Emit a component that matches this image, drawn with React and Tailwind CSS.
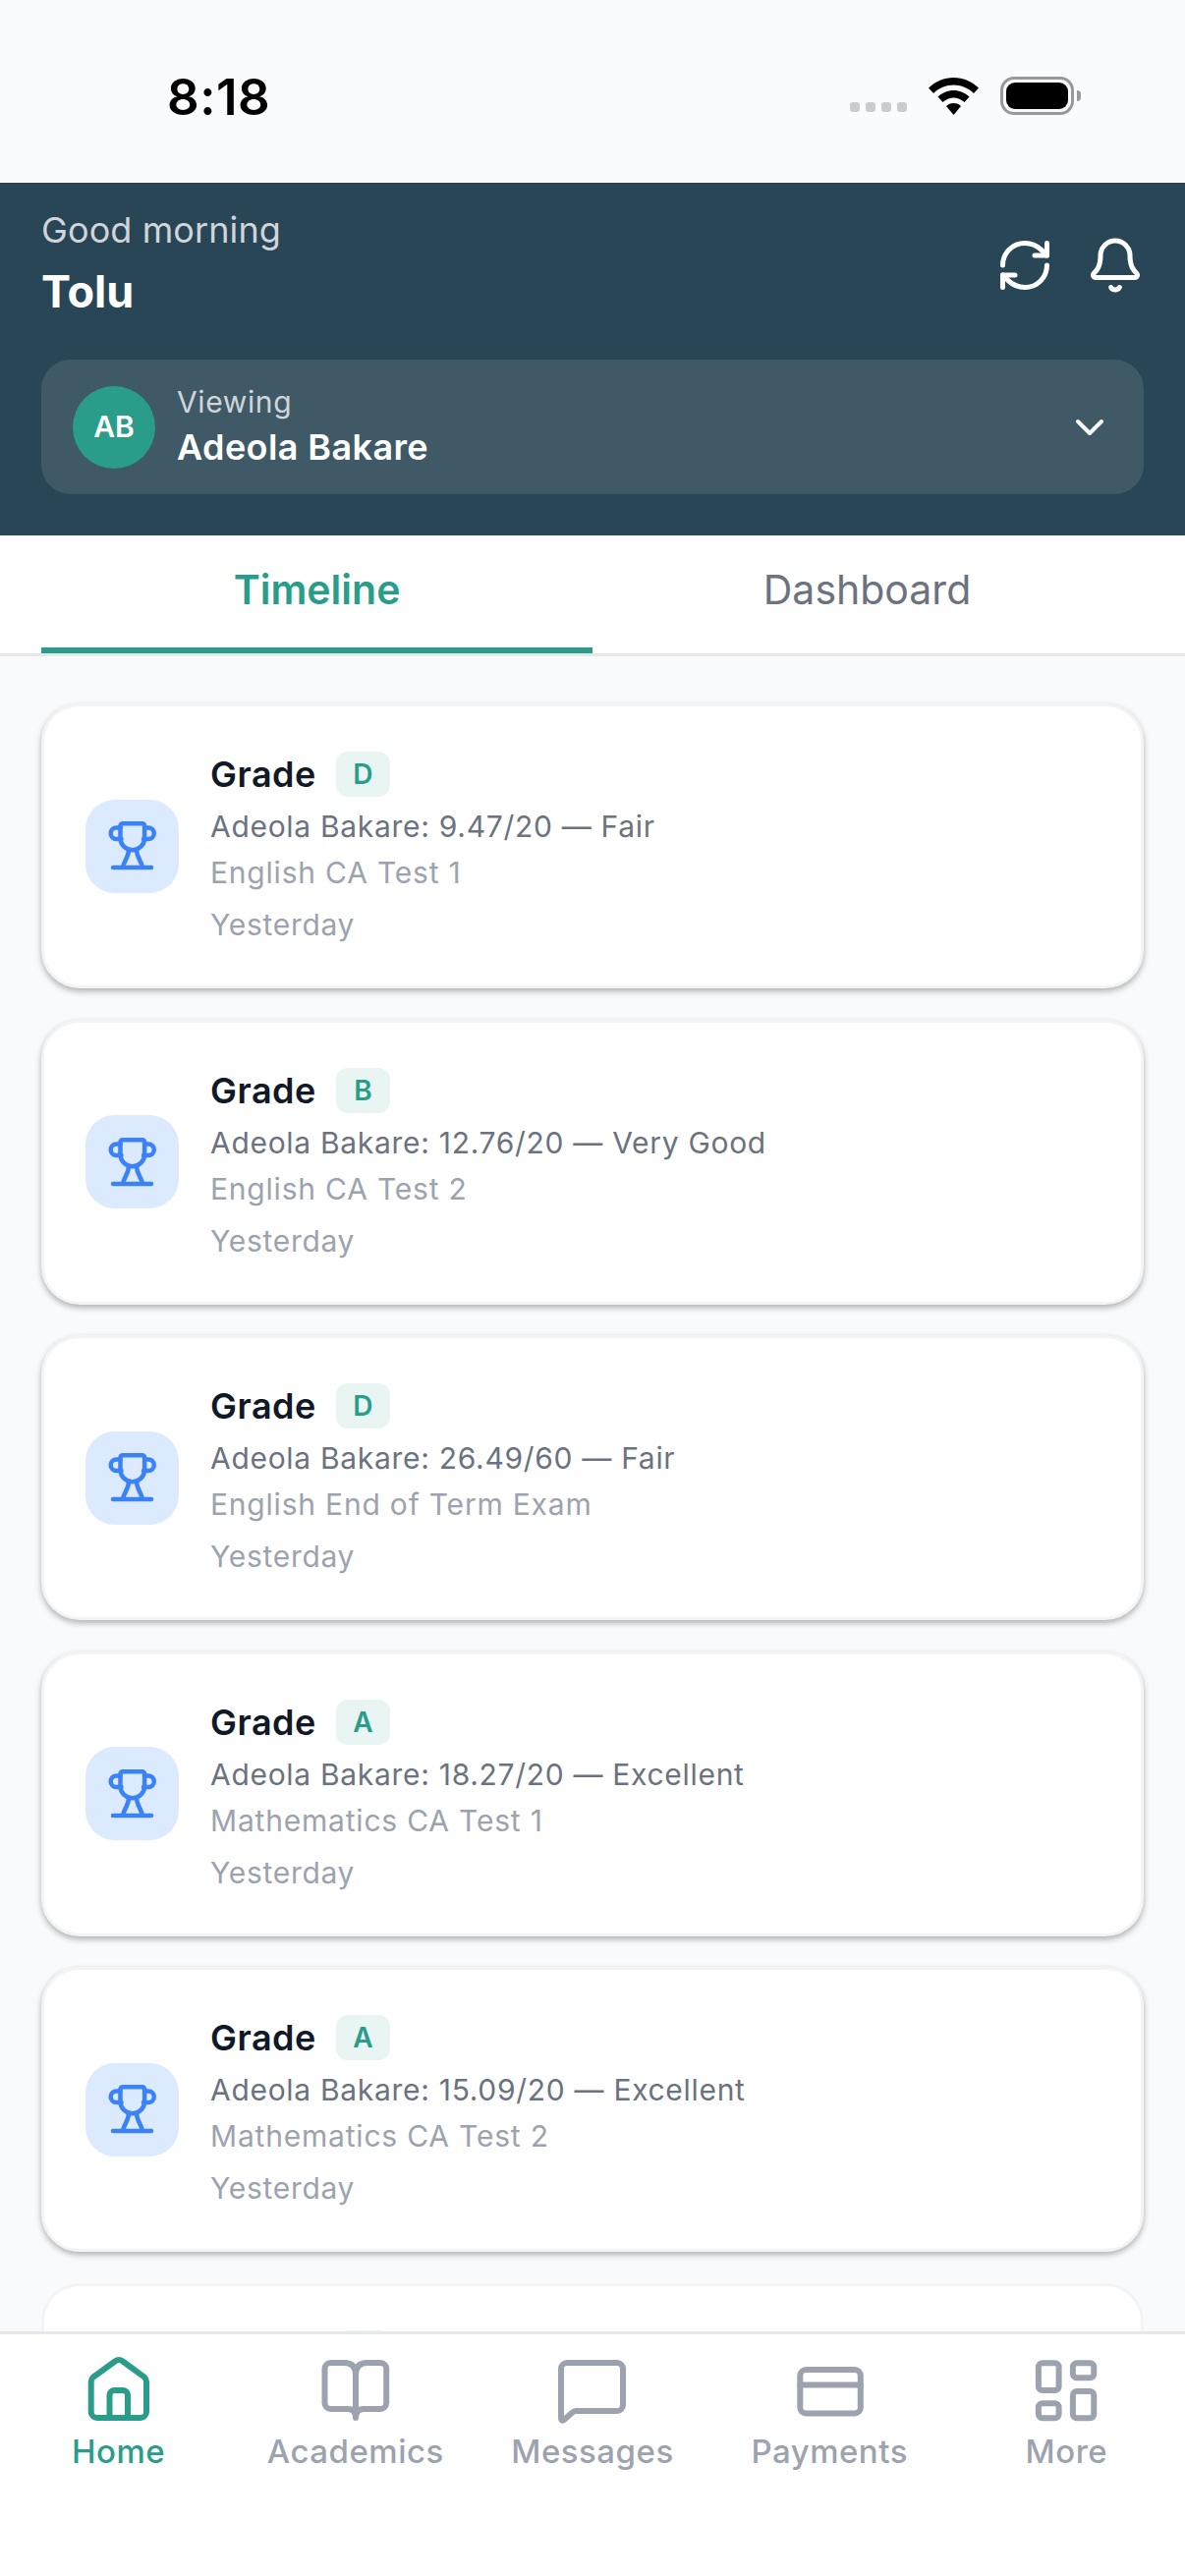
import React from 'react';
import { RefreshCw, Bell, ChevronDown } from 'lucide-react';

const grades = [
  { grade: 'D', score: 'Adeola Bakare: 9.47/20 — Fair', test: 'English CA Test 1' },
  { grade: 'B', score: 'Adeola Bakare: 12.76/20 — Very Good', test: 'English CA Test 2' },
  { grade: 'D', score: 'Adeola Bakare: 26.49/60 — Fair', test: 'English End of Term Exam' },
  { grade: 'A', score: 'Adeola Bakare: 18.27/20 — Excellent', test: 'Mathematics CA Test 1' },
  { grade: 'A', score: 'Adeola Bakare: 15.09/20 — Excellent', test: 'Mathematics CA Test 2' },
];

// tab bar icons share a 78px box
const NavIcon = ({ color, children }) => (
  <svg width="78" height="78" viewBox="0 0 78 78" fill="none" stroke={color} strokeWidth="6" strokeLinecap="round" strokeLinejoin="round">
    {children}
  </svg>
);

const tabs = [
  {
    label: 'Home',
    active: true,
    paths: (
      <>
        <path d="M10.700 27q0-2.500 2-4.300L35 6.500q4-3 8 0L65 22.700q2 1.800 2 4.300V58a6 6 0 0 1-6 6H16.700a6 6 0 0 1-6-6z" />
        <path d="M29.500 64V41a5 5 0 0 1 5-5h8.500a5 5 0 0 1 5 5V64" />
      </>
    ),
  },
  {
    label: 'Academics',
    paths: (
      <path d="M39 20q0-12-12-12H13.500a6 6 0 0 0-6 6V49a6 6 0 0 0 6 6H31q8 0 8 9q0-9 8-9h17.200a6 6 0 0 0 6-6V14a6 6 0 0 0-6-6H51q-12 0-12 12V64" />
    ),
  },
  {
    label: 'Messages',
    paths: (
      <path d="M7 14a6 6 0 0 1 6-6h51a6 6 0 0 1 6 6v37a6 6 0 0 1-6 6H22q-2 0-4 2l-8 7q-3 2-3-2z" />
    ),
  },
  {
    label: 'Payments',
    paths: (
      <>
        <rect x="9.300" y="15" width="61.500" height="44.400" rx="6" />
        <path d="M9.300 30.500H70.800" />
      </>
    ),
  },
  {
    label: 'More',
    paths: (
      <>
        <rect x="10.900" y="8.300" width="20.700" height="27.700" rx="4" />
        <rect x="45.900" y="8.300" width="21.400" height="15" rx="4" />
        <rect x="10.900" y="49.300" width="20.700" height="15" rx="4" />
        <rect x="45.900" y="37" width="21.400" height="27.300" rx="4" />
      </>
    ),
  },
];

const Trophy = () => (
  <svg width="50" height="50" viewBox="0 0 50 50" fill="none" stroke="#3b82f6" strokeWidth="4.500" strokeLinecap="round" strokeLinejoin="round">
    <path d="M12.500 4.500a2.300 2.300 0 0 1 2.300-2.300h20a2.300 2.300 0 0 1 2.300 2.300V17a12.300 12.300 0 0 1-24.600 0z" />
    <path d="M12.500 6.500H8.500a5.800 5.800 0 0 0 0 11.600h5" />
    <path d="M37.200 6.500H41a5.800 5.800 0 0 1 0 11.600h-5" />
    <path d="M21 29c0 7-4 10-6 17.500M29 29c0 7 4 10 6 17.500" />
    <path d="M5 47H44" />
  </svg>
);

const StatusBar = () => (
  <div className="h-[186px] bg-[#fafbfd] flex items-start justify-between pl-[170px] pr-[106px] pt-[68px]">
    <span className="text-[51px] leading-[62px] font-semibold tracking-[0.5px] text-black">8:18</span>
    <div className="flex items-center h-[39px] mt-[10px]">
      <div className="flex gap-[6px] mt-[22px] mr-[22px]">
        {[0, 1, 2, 3].map(i => (
          <span key={i} className="w-[10px] h-[10px] rounded-[3px] bg-[#cccccc]"></span>
        ))}
      </div>
      <svg width="51" height="38" viewBox="0 0 51 38" fill="black" className="mr-[22px]">
        <path d="M25.500 0C35 0 44 4 51 10.500L46 16C40.500 10.500 33 7.500 25.500 7.500S10.500 10.500 5 16L0 10.500C7 4 16 0 25.500 0Z" />
        <path d="M25.500 13C31.500 13 37 15.500 41.500 19.500L36.500 25C33.500 22.500 29.500 20.500 25.500 20.500S17.500 22.500 14.500 25L9.500 19.500C14 15.500 19.500 13 25.500 13Z" />
        <path d="M25.500 26C28.500 26 31 27 33 29L25.500 38L18 29C20 27 22.500 26 25.500 26Z" />
      </svg>
      <div className="w-[75px] h-[39px] rounded-[14px] border-[3px] border-[#999999] p-[3px]">
        <div className="w-full h-full rounded-[9px] bg-black"></div>
      </div>
      <div className="w-[4px] h-[11px] rounded-r-full bg-[#999999] ml-[3px]"></div>
    </div>
  </div>
);

const GradeCard = ({ grade, score, test }) => (
  <div className="bg-white rounded-[39px] border-[3px] border-[#f3f4f6] shadow-[0_3px_6px_rgba(0,0,0,0.3)] h-[290px] flex items-center gap-[32px] pl-[42px] pr-[42px] shrink-0">
    <div className="w-[95px] h-[95px] rounded-[30px] bg-[#dbeafe] flex items-center justify-center">
      <Trophy />
    </div>
    <div className="flex flex-col pt-[8px]">
      <div className="flex items-center gap-[20px] h-[46px]">
        <span className="text-[36px] leading-[46px] font-semibold tracking-[0.5px] text-[#111827]">Grade</span>
        <span className="w-[55px] h-[46px] rounded-[12px] bg-[#e8f5f3] flex items-center justify-center text-[28px] font-semibold text-[#2a9d8a]">{grade}</span>
      </div>
      <span className="text-[30px] leading-[47px] mt-[7px] tracking-[0.7px] text-[#6b7280]">{score}</span>
      <span className="text-[30px] leading-[47px] tracking-[0.8px] text-[#9ca3af]">{test}</span>
      <span className="text-[30px] leading-[47px] mt-[6px] tracking-[0.7px] text-[#9ca3af]">Yesterday</span>
    </div>
  </div>
);

export default function App() {
  return (
    <div className="w-[1206px] h-[2622px] flex flex-col bg-[#f9fafb] overflow-hidden font-['Inter',sans-serif]">
      <StatusBar />

      <div className="h-[359px] bg-[#284655] px-[42px] pt-[16px] shrink-0">
        <div className="flex items-center justify-between h-[132px]">
          <div className="flex flex-col">
            <span className="text-[36px] leading-[48px] tracking-[0.1px] text-[#d1d5db]">Good morning</span>
            <span className="text-[45px] leading-[60px] mt-[9px] font-bold text-white">Tolu</span>
          </div>
          <div className="flex items-center gap-[32px] -mr-[1px] mt-[3px]">
            <RefreshCw size={60} color="white" strokeWidth={2} />
            <Bell size={60} color="white" strokeWidth={2} />
          </div>
        </div>
        <div className="mt-[32px] h-[137px] rounded-[30px] bg-[#3f5a66] flex items-center pl-[32px] pr-[31px]">
          <div className="w-[84px] h-[84px] rounded-full bg-[#2a9d8a] flex items-center justify-center text-[30px] font-semibold text-white">AB</div>
          <div className="flex flex-col ml-[22px] flex-1">
            <span className="text-[30px] leading-[42px] -mt-[2px] tracking-[0.62px] text-[#d1d5db]">Viewing</span>
            <span className="text-[36px] leading-[48px] mt-[1px] font-semibold tracking-[0.4px] text-white">Adeola Bakare</span>
          </div>
          <ChevronDown size={48} color="white" strokeWidth={2} />
        </div>
      </div>

      <div className="h-[123px] bg-white border-b-[3px] border-[#e5e7eb] px-[42px] flex shrink-0">
        <div className="w-[561px] h-[120px] pb-[2px] border-b-[6px] border-[#2a9d8a] flex items-center justify-center text-[41px] font-semibold text-[#2a9d8a]">Timeline</div>
        <div className="w-[561px] h-[120px] pb-[8px] pr-[2px] flex items-center justify-center text-[41px] text-[#6b7280]">Dashboard</div>
      </div>

      <div className="flex-1 min-h-0 overflow-hidden px-[42px] pt-[48px] flex flex-col gap-[31.5px]">
        {grades.map((g, i) => (
          <GradeCard key={i} {...g} />
        ))}
        <div className="bg-white rounded-[39px] border-[3px] border-[#f3f4f6] h-[290px] shrink-0 pt-[45px] pl-[298px]">
          <div className="w-[55px] h-[46px] rounded-[12px] bg-[#e8f5f3]"></div>
        </div>
      </div>

      <div className="h-[249px] bg-white border-t-[3px] border-[#e5e7eb] grid grid-cols-5 shrink-0 pt-[21px]">
        {tabs.map(({ label, paths, active }) => (
          <div key={label} className="flex flex-col items-center">
            <NavIcon color={active ? '#2a9d8a' : '#9ca3af'}>{paths}</NavIcon>
            <span className={`text-[33px] leading-[40px] font-medium tracking-[0.5px] ${active ? 'text-[#2a9d8a]' : 'text-[#9ca3af]'}`}>{label}</span>
          </div>
        ))}
      </div>
    </div>
  );
}
